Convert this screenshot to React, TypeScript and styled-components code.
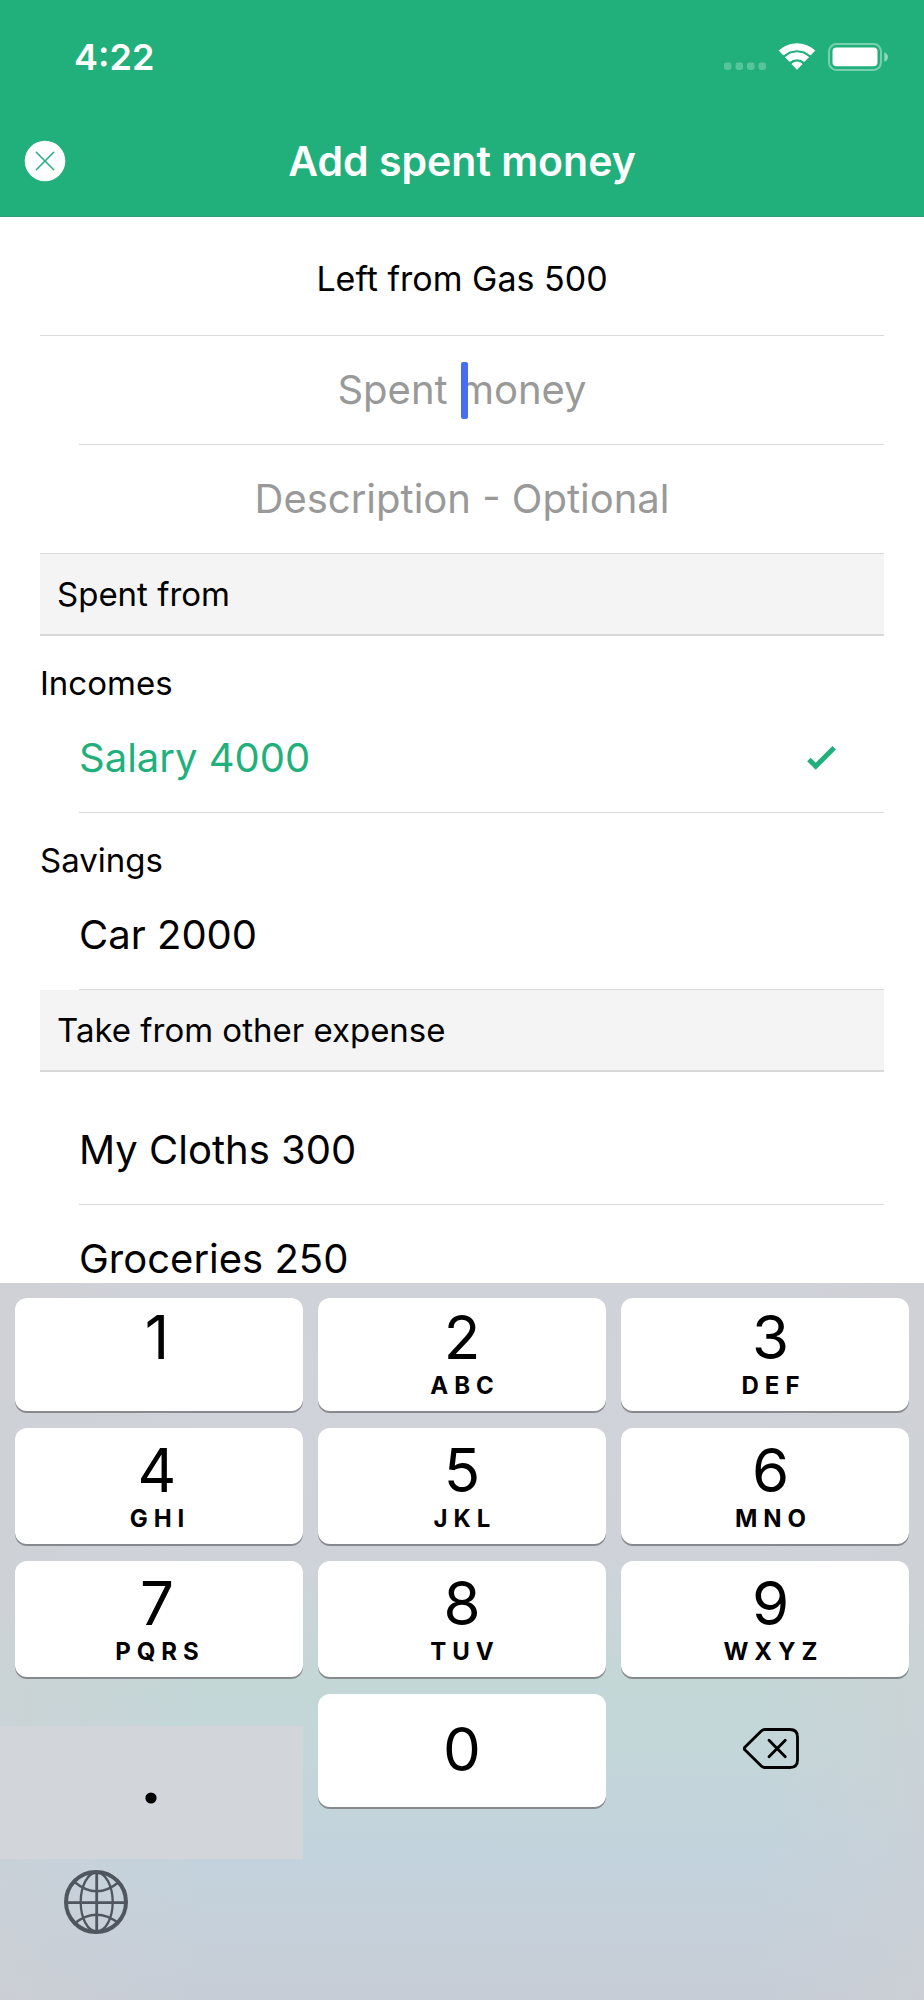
import React, { useState } from "react";
import styled, { createGlobalStyle, css } from "styled-components";

const green = "#21b07b";
const hairline = "#d9d9dc";

const GlobalStyle = createGlobalStyle`
  * { box-sizing: border-box; }
  body {
    margin: 0;
    background: #fff;
    color: #000;
    font-family: Inter, "Liberation Sans", sans-serif;
  }
  button, input {
    font: inherit;
    color: inherit;
    margin: 0;
    padding: 0;
    border: 0;
    background: none;
  }
`;

const Screen = styled.div`
  display: flex;
  flex-direction: column;
  height: 100vh;
`;

const Header = styled.header`
  flex: none;
  background: ${green};
  color: #fff;
  border-bottom: 1px solid #2aa276;
`;

const StatusBar = styled.div`
  display: flex;
  align-items: center;
  justify-content: space-between;
  height: 106px;
  padding: 8px 36px 0 74px;
`;

const Time = styled.span`
  font-size: 36px;
  font-weight: 600;
  line-height: 44px;
`;

const StatusIcons = styled.div`
  display: flex;
  align-items: center;
  gap: 12px;
`;

const NavBar = styled.div`
  display: grid;
  grid-template-columns: 60px 1fr 60px;
  align-items: center;
  height: 110px;
  padding: 0 24px;
`;

const CloseButton = styled.button`
  display: flex;
  width: 42px;
  height: 42px;
`;

const Title = styled.h1`
  margin: 0;
  font-size: 41px;
  font-weight: 600;
  line-height: 50px;
  text-align: center;
  white-space: nowrap;
`;

const Content = styled.main`
  flex: 1 1 0;
  min-height: 0;
  overflow: hidden;
  padding: 0 40px;
`;

const Remaining = styled.p`
  margin: 0;
  padding: 41px 0 35px;
  border-bottom: 1px solid ${hairline};
  font-size: 34px;
  line-height: 42px;
  text-align: center;
`;

const rowBase = css<{ $full?: boolean }>`
  position: relative;
  display: flex;
  align-items: center;
  height: 109px;
  font-size: 40px;
  line-height: 50px;
  background: linear-gradient(${hairline}, ${hairline}) right bottom /
    ${(p) => (p.$full ? "100%" : "calc(100% - 39px)")} 1px no-repeat;
`;

const FieldRow = styled.div<{ $full?: boolean; $caret?: boolean }>`
  ${rowBase}
  padding-bottom: 2px;
  ${(p) =>
    p.$caret &&
    css`
      &::after {
        content: "";
        position: absolute;
        left: 50%;
        top: 26px;
        width: 7px;
        height: 57px;
        border-radius: 2px;
        margin-left: -1px;
        background: #466df2;
      }
    `}
`;

const Field = styled.input`
  width: 100%;
  text-align: center;
  outline: none;
  &::placeholder {
    color: #999;
    opacity: 1;
  }
`;

const GroupTitle = styled.h2`
  margin: 0;
  padding: 19px 17px;
  background: #f4f4f4;
  border-bottom: 2px solid #d8d8d8;
  font-size: 33px;
  font-weight: 400;
  line-height: 42px;
`;

const Subheading = styled.h3`
  margin: 0;
  padding: 26px 0 0;
  font-size: 33px;
  font-weight: 400;
  line-height: 42px;
`;

const Plain = styled.div`
  padding-top: 24px;
`;

const OptionRow = styled.label<{ $selected: boolean }>`
  ${rowBase}
  justify-content: space-between;
  padding: 0 48px 2px 39px;
  color: ${(p) => (p.$selected ? green : "#000")};
`;

const OptionInput = styled.input`
  position: absolute;
  inset: 0;
  opacity: 0;
`;

const Keyboard = styled.section`
  flex: none;
  display: grid;
  grid-template-columns: repeat(3, minmax(0, 1fr));
  grid-template-rows: 113px 116px 116px 113px 176px;
  gap: 17px 15px;
  padding: 15px 15px 0;
  background:
    linear-gradient(
      90deg,
      rgba(206, 208, 213, 0.6) 0%,
      rgba(206, 208, 213, 0) 22%,
      rgba(206, 208, 213, 0) 82%,
      rgba(206, 208, 213, 0.6) 100%
    ),
    linear-gradient(
      180deg,
      #d0d2d9 0%,
      #cfd3d9 38%,
      #c4d7d7 56%,
      #c3d6d9 66%,
      #c3d3dd 80%,
      #c5d0da 89%,
      #c7cdd6 100%
    );
`;

type Side = "left" | "middle" | "right";

const sidePadding = { left: "0 4px 11px 0", middle: "0 0 11px", right: "0 0 11px 11px" };

const Key = styled.button<{ $side: Side }>`
  display: flex;
  flex-direction: column;
  align-items: center;
  justify-content: flex-end;
  padding: ${(p) => sidePadding[p.$side]};
  border-radius: 12px;
  background: #fff;
  box-shadow: 0 2px 0 #86898d;
`;

const Digit = styled.span`
  font-size: 60px;
  line-height: 70px;
`;

const Letters = styled.span`
  height: 28px;
  padding-left: 6px;
  font-size: 24px;
  font-weight: 700;
  line-height: 28px;
  letter-spacing: 6px;
`;

const ZeroKey = styled(Key)`
  grid-column: 2;
  grid-row: 4;
  justify-content: center;
  padding-bottom: 4px;
`;

const PointKey = styled.button`
  grid-column: 1;
  grid-row: 4 / span 2;
  align-self: start;
  display: flex;
  align-items: center;
  justify-content: center;
  height: 133px;
  margin: 32px 0 0 -15px;
  padding: 11px 2px 0 0;
  background: #d2d5da;
`;

const DeleteKey = styled.button`
  grid-column: 3;
  grid-row: 4;
  display: flex;
  align-items: center;
  justify-content: center;
  padding: 0 0 4px 12px;
`;

const GlobeKey = styled.button`
  grid-column: 1;
  grid-row: 5;
  align-self: start;
  display: flex;
  width: 64px;
  height: 64px;
  margin: 46px 0 0 49px;
`;

const SignalIcon = () => (
  <svg width="42" height="28" viewBox="0 0 42 28" fill="#fff" fillOpacity="0.25" aria-hidden="true">
    {[0, 11.5, 23, 34.5].map((x) => (
      <rect key={x} x={x} y="19.5" width="7.5" height="7.5" rx="2.4" />
    ))}
  </svg>
);

const WifiIcon = () => (
  <svg width="38" height="28" viewBox="0 0 37 28" fill="#fff" stroke="#fff" strokeWidth="1" strokeLinejoin="round" aria-hidden="true">
    <path d="M.8 7.6A26.5 26.5 0 0 1 36.2 7.6L32.1 11.9A20.5 20.5 0 0 0 4.9 11.9Z" />
    <path d="M7 14.1A17.5 17.5 0 0 1 30 14.1L25.8 18.4A11.5 11.5 0 0 0 11.2 18.4Z" />
    <path d="M13.4 21A7.5 7.5 0 0 1 23.6 21L18.5 26.3Z" />
  </svg>
);

const BatteryIcon = () => (
  <svg width="60" height="28" viewBox="0 0 60 28" aria-hidden="true">
    <rect x="1" y="1" width="52" height="26" rx="7.5" fill="none" stroke="#fff" strokeOpacity="0.4" strokeWidth="2" />
    <rect x="4.5" y="4.5" width="45" height="18.8" rx="4" fill="#fff" />
    <path d="M56.3 9.2C58.6 10 60 11.9 60 14S58.6 18 56.3 18.8Z" fill="#fff" fillOpacity="0.5" />
  </svg>
);

const CloseIcon = () => (
  <svg width="42" height="42" viewBox="0 0 42 42" aria-hidden="true">
    <circle cx="21" cy="21" r="20.3" fill="#fff" />
    <path d="M12.3 12.3 29.7 29.7M29.7 12.3 12.3 29.7" stroke={green} strokeWidth="1.5" strokeLinecap="round" />
  </svg>
);

const CheckIcon = () => (
  <svg width="29" height="25" viewBox="0 0 29 25" fill="none" aria-hidden="true">
    <path d="M1.9 14.4 8.7 21.2 27.2 2.7" stroke={green} strokeWidth="5" />
  </svg>
);

const DeleteIcon = () => (
  <svg width="56" height="41" viewBox="0 0 56 41" fill="none" stroke="#000" strokeWidth="2.8" strokeLinecap="round" strokeLinejoin="round" aria-hidden="true">
    <path d="M21.8 1.5H47Q54.5 1.5 54.5 9V32Q54.5 39.5 47 39.5H21.8Q19.8 39.5 18.3 38.1L1.8 21.8Q.8 20.5 1.8 19.2L18.3 2.9Q19.8 1.5 21.8 1.5Z" />
    <path d="M26 12.3 42.3 28.7M42.3 12.3 26 28.7" />
  </svg>
);

const GlobeIcon = () => (
  <svg width="64" height="64" viewBox="0 0 64 64" fill="none" stroke="#50565e" strokeWidth="2.3" aria-hidden="true">
    <circle cx="32" cy="32" r="30" strokeWidth="4" />
    <ellipse cx="32.7" cy="32" rx="16" ry="29.5" />
    <path d="M32.7 2V62M2 32.6H62" strokeWidth="2.8" />
    <path d="M10.5 12Q32.5 30.5 55 12M10.5 53.5Q32.5 36 55 53.5" />
  </svg>
);

const PointIcon = () => (
  <svg width="12" height="12" viewBox="0 0 12 12" aria-hidden="true">
    <circle cx="6" cy="6" r="5.6" />
  </svg>
);

const keys: { digit: string; letters: string; side: Side }[] = [
  { digit: "1", letters: "", side: "left" },
  { digit: "2", letters: "ABC", side: "middle" },
  { digit: "3", letters: "DEF", side: "right" },
  { digit: "4", letters: "GHI", side: "left" },
  { digit: "5", letters: "JKL", side: "middle" },
  { digit: "6", letters: "MNO", side: "right" },
  { digit: "7", letters: "PQRS", side: "left" },
  { digit: "8", letters: "TUV", side: "middle" },
  { digit: "9", letters: "WXYZ", side: "right" },
];

export default function App() {
  const [source, setSource] = useState("Salary 4000");
  const [amount, setAmount] = useState("");

  const option = (name: string) => (
    <OptionRow key={name} $selected={source === name}>
      <span>{name}</span>
      <OptionInput
        type="radio"
        name="source"
        checked={source === name}
        onChange={() => setSource(name)}
      />
      {source === name && <CheckIcon />}
    </OptionRow>
  );

  const press = (value: string) => setAmount((current) => current + value);

  return (
    <Screen>
      <GlobalStyle />
      <Header>
        <StatusBar>
          <Time>4:22</Time>
          <StatusIcons>
            <SignalIcon />
            <WifiIcon />
            <BatteryIcon />
          </StatusIcons>
        </StatusBar>
        <NavBar>
          <CloseButton type="button" aria-label="Close">
            <CloseIcon />
          </CloseButton>
          <Title>Add spent money</Title>
        </NavBar>
      </Header>
      <Content>
        <Remaining>Left from Gas 500</Remaining>
        <FieldRow $caret={amount === ""}>
          <Field
            aria-label="Spent money"
            placeholder="Spent money"
            inputMode="decimal"
            value={amount}
            onChange={(e) => setAmount(e.target.value)}
          />
        </FieldRow>
        <FieldRow $full>
          <Field aria-label="Description" placeholder="Description - Optional" />
        </FieldRow>
        <GroupTitle>Spent from</GroupTitle>
        <Subheading>Incomes</Subheading>
        {option("Salary 4000")}
        <Subheading>Savings</Subheading>
        {option("Car 2000")}
        <GroupTitle>Take from other expense</GroupTitle>
        <Plain>
          {option("My Cloths 300")}
          {option("Groceries 250")}
        </Plain>
      </Content>
      <Keyboard aria-label="Keypad">
        {keys.map((k) => (
          <Key key={k.digit} type="button" $side={k.side} onClick={() => press(k.digit)}>
            <Digit>{k.digit}</Digit>
            <Letters>{k.letters}</Letters>
          </Key>
        ))}
        <PointKey type="button" aria-label="Decimal point" onClick={() => press(".")}>
          <PointIcon />
        </PointKey>
        <ZeroKey type="button" $side="middle" onClick={() => press("0")}>
          <Digit>0</Digit>
        </ZeroKey>
        <DeleteKey type="button" aria-label="Delete" onClick={() => setAmount((a) => a.slice(0, -1))}>
          <DeleteIcon />
        </DeleteKey>
        <GlobeKey type="button" aria-label="Switch keyboard">
          <GlobeIcon />
        </GlobeKey>
      </Keyboard>
    </Screen>
  );
}
